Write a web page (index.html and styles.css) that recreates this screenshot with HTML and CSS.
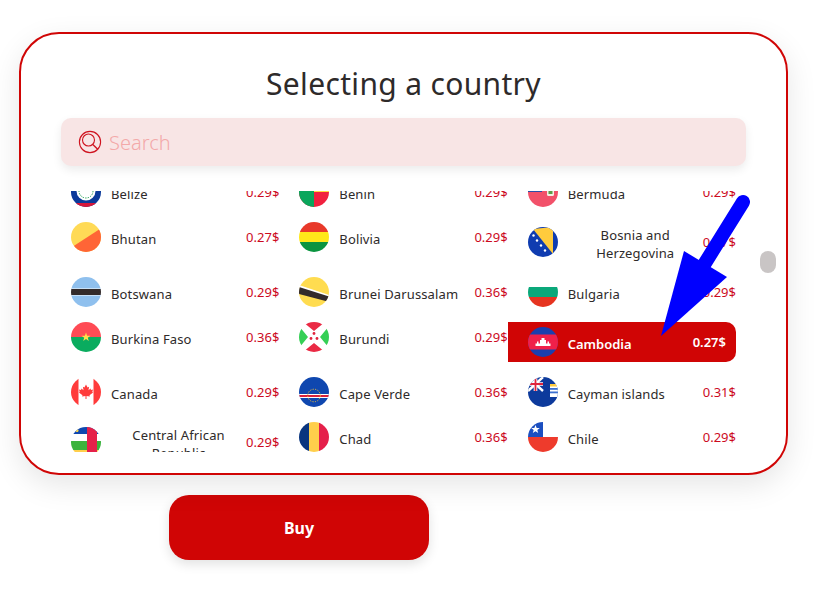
FILE: index.html
```html
<!DOCTYPE html>
<html lang="en">
<head>
<meta charset="utf-8">
<title>Selecting a country</title>
<link rel="stylesheet" href="styles.css">
</head>
<body>
<main class="page">
  <section class="card">
    <h1 class="title">Selecting a country</h1>
    <div class="search">
      <svg class="search-icon" viewBox="0 0 24 24" width="24" height="24" fill="none" stroke="#cf1420" stroke-width="1.1"><circle cx="12" cy="12" r="10.6"/><circle cx="10.5" cy="10" r="6"/><path d="M14.8 14.4l5.2 5" stroke-width="1.4"/></svg>
      <input class="search-input" type="text" placeholder="Search" aria-label="Search">
    </div>
    <div class="viewport">
      <ul class="grid">
        <li class="item"><svg class="flag" viewBox="0 0 30 30"><rect width="30" height="30" fill="#0b3a9a"/><rect y="26" width="30" height="4" fill="#d6173a"/><circle cx="15" cy="14" r="9.500" fill="#fff"/><circle cx="15" cy="14" r="7" fill="none" stroke="#1c9b50" stroke-width="1" stroke-dasharray="1.400 1.200"/></svg><span class="name">Belize</span><span class="price">0.29$</span></li>
        <li class="item"><svg class="flag" viewBox="0 0 30 30"><rect width="30" height="15" fill="#ffda44"/><rect y="15" width="30" height="15" fill="#f1213f"/><rect width="15" height="30" fill="#0aa65c"/></svg><span class="name">Benin</span><span class="price">0.29$</span></li>
        <li class="item"><svg class="flag" viewBox="0 0 30 30"><rect width="30" height="30" fill="#f2516a"/><rect width="14" height="15" fill="#2a4fa8"/><rect x="19" y="11" width="7" height="8" rx="1.500" fill="#f3f1e4"/><rect x="20.500" y="14" width="4" height="3" fill="#5d9b4a"/></svg><span class="name">Bermuda</span><span class="price">0.29$</span></li>

        <li class="item"><svg class="flag" viewBox="0 0 30 30"><rect width="30" height="30" fill="#ffda56"/><path d="M2.300 24.300L30 6.300V30H2.300z" fill="#ff6536"/></svg><span class="name">Bhutan</span><span class="price">0.27$</span></li>
        <li class="item"><svg class="flag" viewBox="0 0 30 30"><rect width="30" height="10" fill="#e8392a"/><rect y="10" width="30" height="10" fill="#ffe81a"/><rect y="20" width="30" height="10" fill="#0a9440"/></svg><span class="name">Bolivia</span><span class="price">0.29$</span></li>
        <li class="item"><svg class="flag" viewBox="0 0 30 30"><rect width="30" height="30" fill="#0f3cb0"/><path d="M5 2L25 0V27z" fill="#ffcb3d"/><g fill="#fff"><circle cx="5.500" cy="8.500" r="1.200"/><circle cx="9" cy="13.500" r="1.200"/><circle cx="13" cy="18.500" r="1.200"/><circle cx="17" cy="23.500" r="1.200"/></g></svg><span class="name">Bosnia and Herzegovina</span><span class="price">0.27$</span></li>

        <li class="item"><svg class="flag" viewBox="0 0 30 30"><rect width="30" height="30" fill="#8fc0ee"/><rect y="11.500" width="30" height="7" fill="#fff"/><rect y="12" width="30" height="6" fill="#332b2b"/></svg><span class="name">Botswana</span><span class="price">0.29$</span></li>
        <li class="item"><svg class="flag" viewBox="0 0 30 30"><rect width="30" height="30" fill="#ffdc50"/><path d="M0 8L30 18V23L0 13z" fill="#fff"/><path d="M0 10L30 19.500L28.500 24.500L0 17z" fill="#332b2b"/></svg><span class="name">Brunei Darussalam</span><span class="price">0.36$</span></li>
        <li class="item"><svg class="flag" viewBox="0 0 30 30"><rect width="30" height="10" fill="#fff"/><rect y="10" width="30" height="10" fill="#0aa87a"/><rect y="20" width="30" height="10" fill="#e63420"/></svg><span class="name">Bulgaria</span><span class="price">0.29$</span></li>

        <li class="item"><svg class="flag" viewBox="0 0 30 30"><rect width="30" height="15" fill="#ff4b55"/><rect y="15" width="30" height="15" fill="#0aac5f"/><path d="M15 10.500l1.100 3.200h3.400l-2.700 2 1 3.300-2.800-2-2.800 2 1-3.300-2.700-2h3.400z" fill="#ffe04a"/></svg><span class="name">Burkina Faso</span><span class="price">0.36$</span></li>
        <li class="item"><svg class="flag" viewBox="0 0 30 30"><rect width="30" height="30" fill="#fff"/><path d="M4 0H26L15 9z M4 30H26L15 21z" fill="#ea2a44"/><path d="M0 4V26L9 15z M30 4V26L21 15z" fill="#35cf55"/><g fill="#e0243c"><circle cx="15" cy="11.500" r="1.400"/><circle cx="12" cy="16.500" r="1.400"/><circle cx="18" cy="16.500" r="1.400"/></g></svg><span class="name">Burundi</span><span class="price">0.29$</span></li>
        <li class="item item-selected"><svg class="flag" viewBox="0 0 30 30"><rect width="30" height="30" fill="#1b3fae"/><rect y="7.500" width="30" height="15" fill="#f0204a"/><path d="M7.500 19V16.500H9V14.500H10.500V16.500H12V13H13.500V11H16.500V13H18V16.500H19.500V14.500H21V16.500H22.500V19z" fill="#fff"/></svg><span class="name">Cambodia</span><span class="price">0.27$</span></li>

        <li class="item"><svg class="flag" viewBox="0 0 30 30"><rect width="30" height="30" fill="#fff"/><rect width="7.500" height="30" fill="#ff3b3b"/><rect x="22.500" width="7.500" height="30" fill="#ff3b3b"/><path d="M15 7.500l1.600 3 1.500-.8-.6 3.600 2-1.800.5 1.400 2-.3-.7 2.300.8.500-3.600 2.800.4 1.300-3.400-.4v3h-1v-3l-3.400.4.400-1.300-3.600-2.800.8-.5-.7-2.300 2 .3.500-1.400 2 1.800-.6-3.600 1.500.8z" fill="#ff3b3b"/></svg><span class="name">Canada</span><span class="price">0.29$</span></li>
        <li class="item"><svg class="flag" viewBox="0 0 30 30"><rect width="30" height="30" fill="#0f47af"/><rect y="17" width="30" height="4" fill="#fff"/><rect y="18" width="30" height="2" fill="#d8213a"/><circle cx="15" cy="18.500" r="6.300" fill="none" stroke="#e8b93c" stroke-width="1" stroke-dasharray="1.200 1.300"/></svg><span class="name">Cape Verde</span><span class="price">0.36$</span></li>
        <li class="item"><svg class="flag" viewBox="0 0 30 30"><rect width="30" height="30" fill="#0d3a9c"/><path d="M0 0L15 14M15 0L0 14" stroke="#fff" stroke-width="2.400"/><path d="M7.500 0V14M0 7H15" stroke="#fff" stroke-width="3.600"/><path d="M7.500 0V14M0 7H15" stroke="#e0243c" stroke-width="1.800"/><rect x="22" y="7" width="8" height="13" fill="#fff"/><rect x="22" y="7" width="8" height="2.500" fill="#ffcb3d"/><rect x="22" y="11" width="8" height="1.800" fill="#3b6fd0"/><rect x="22" y="14.500" width="8" height="1.800" fill="#3b6fd0"/></svg><span class="name">Cayman islands</span><span class="price">0.31$</span></li>

        <li class="item"><svg class="flag" viewBox="0 0 30 30"><rect width="30" height="7" fill="#0f47af"/><rect y="7" width="30" height="7" fill="#fff"/><rect y="14" width="30" height="9" fill="#3bb33d"/><rect y="23" width="30" height="7" fill="#ffcf4b"/><rect x="16" width="10" height="30" fill="#e5204a"/><circle cx="6" cy="3.500" r="1.500" fill="#ffdb4a"/></svg><span class="name">Central African Republic</span><span class="price">0.29$</span></li>
        <li class="item"><svg class="flag" viewBox="0 0 30 30"><rect width="10" height="30" fill="#0a357f"/><rect x="10" width="10" height="30" fill="#ffcf4b"/><rect x="20" width="10" height="30" fill="#e5204a"/></svg><span class="name">Chad</span><span class="price">0.36$</span></li>
        <li class="item"><svg class="flag" viewBox="0 0 30 30"><rect width="30" height="15" fill="#fff"/><rect width="15" height="15" fill="#1c4fc0"/><rect y="15" width="30" height="15" fill="#ee3b2c"/><path d="M7.500 3l1.200 3h3.100l-2.500 2 .9 3-2.700-1.800L4.800 11l.9-3-2.500-2h3.100z" fill="#fff"/></svg><span class="name">Chile</span><span class="price">0.29$</span></li>
      </ul>
    </div>
    <div class="thumb"></div>
  </section>
  <button class="buy" type="button">Buy</button>
  <svg class="arrow" viewBox="0 0 833 589" width="833" height="589"><path d="M743 202L697 276" stroke="#0000ff" stroke-width="14" stroke-linecap="round" fill="none"/><path d="M684 251L727 277L661 336z" fill="#0000ff"/></svg>
</main>
</body>
</html>
```

FILE: styles.css
```css
* { box-sizing: border-box; }
html, body { margin: 0; padding: 0; background: #fff; overflow: hidden; }
body { font-family: "Noto Sans", sans-serif; color: #2e2a2a; }
.page { position: relative; width: 833px; height: 589px; padding: 32px 0 0 19px; }

.card {
  position: relative;
  width: 769px;
  height: 443px;
  padding: 28px 40px 0 30px;
  border: 2px solid #d00505;
  border-radius: 40px;
  background: #fff;
  box-shadow: 0 10px 30px rgba(0, 0, 0, .1);
}
.title {
  margin: 0 0 12px 10px;
  font-size: 30px;
  line-height: 44px;
  font-weight: 400;
  letter-spacing: .33px;
  text-align: center;
  color: #2e2a2a;
}
.search {
  display: flex;
  align-items: center;
  gap: 7px;
  height: 48px;
  margin-left: 10px;
  padding-left: 17px;
  border-radius: 10px;
  background: #f8e5e5;
  box-shadow: 0 4px 10px rgba(0, 0, 0, .08);
}
.search-icon { flex: none; }
.search-input {
  flex: 1;
  min-width: 0;
  padding: 0;
  border: 0;
  outline: 0;
  background: transparent;
  font-family: inherit;
  font-size: 20px;
  font-weight: 300;
  color: #f3a9a9;
}
.search-input::placeholder { color: #f3a9a9; opacity: 1; }

.viewport {
  height: 261px;
  margin: 25px 10px 0 0;
  overflow: hidden;
}
.grid {
  display: grid;
  grid-template-columns: repeat(3, 1fr);
  gap: 15px 0;
  align-items: start;
  margin: -14px 0 0;
  padding: 0;
  list-style: none;
  font-size: 13px;
  line-height: 18px;
}
.item {
  display: flex;
  align-items: center;
  padding-left: 20px;
}
.flag {
  flex: none;
  width: 30px;
  height: 30px;
  margin-right: 10px;
  border-radius: 50%;
}
.name { margin-top: 4px; letter-spacing: .13px; text-align: center; }
.price { flex: none; margin-left: auto; color: #cc0a1e; }
.item-selected {
  padding: 5px 10px 5px 20px;
  border-radius: 0 10px 10px 0;
  background: #d00505;
  color: #fff;
  font-weight: 600;
}
.item-selected .name { letter-spacing: 0; }
.item-selected .price { color: #fff; }

.thumb {
  position: absolute;
  top: 217px;
  left: 739px;
  width: 16px;
  height: 22px;
  border-radius: 8px;
  background: #c9c5c5;
}
.buy {
  display: block;
  width: 260px;
  height: 65px;
  margin: 20px 0 0 150px;
  border: 0;
  border-radius: 20px;
  background: #d00505;
  color: #fff;
  font-family: inherit;
  font-size: 16px;
  font-weight: 700;
  box-shadow: 0 4px 12px rgba(0, 0, 0, .12);
}
.arrow { position: absolute; top: 0; left: 0; pointer-events: none; }
```
